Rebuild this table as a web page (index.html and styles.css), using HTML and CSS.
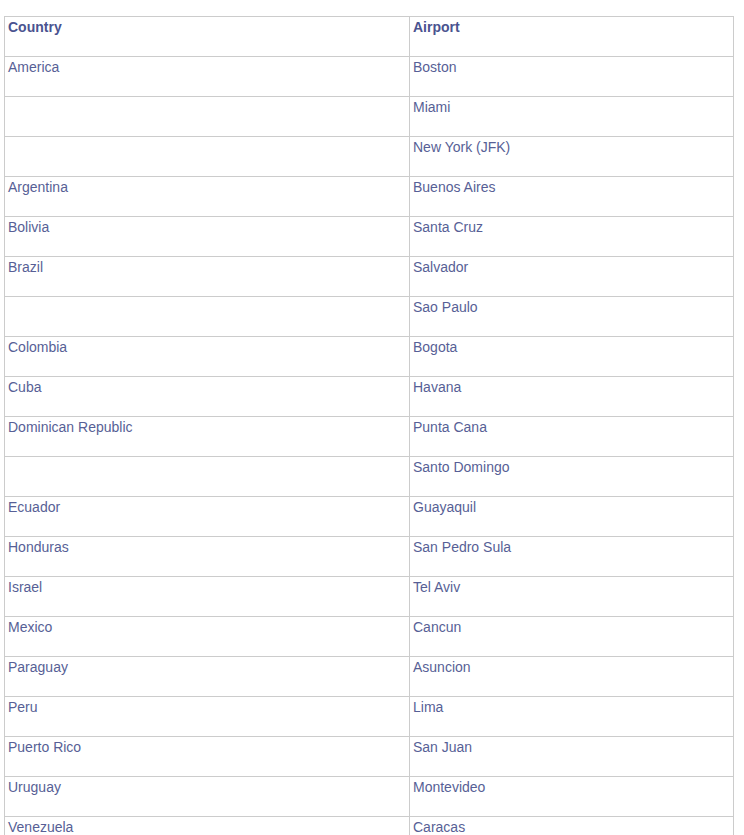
FILE: index.html
```html
<!DOCTYPE html>
<html>
<head>
<meta charset="utf-8">
<link rel="stylesheet" href="styles.css">
</head>
<body>
<table class="airports">
  <colgroup><col class="col-country"><col class="col-airport"></colgroup>
  <thead>
    <tr><th>Country</th><th>Airport</th></tr>
  </thead>
  <tbody>
    <tr><td>America</td><td>Boston</td></tr>
    <tr><td></td><td>Miami</td></tr>
    <tr><td></td><td>New York (JFK)</td></tr>
    <tr><td>Argentina</td><td>Buenos Aires</td></tr>
    <tr><td>Bolivia</td><td>Santa Cruz</td></tr>
    <tr><td>Brazil</td><td>Salvador</td></tr>
    <tr><td></td><td>Sao Paulo</td></tr>
    <tr><td>Colombia</td><td>Bogota</td></tr>
    <tr><td>Cuba</td><td>Havana</td></tr>
    <tr><td>Dominican Republic</td><td>Punta Cana</td></tr>
    <tr><td></td><td>Santo Domingo</td></tr>
    <tr><td>Ecuador</td><td>Guayaquil</td></tr>
    <tr><td>Honduras</td><td>San Pedro Sula</td></tr>
    <tr><td>Israel</td><td>Tel Aviv</td></tr>
    <tr><td>Mexico</td><td>Cancun</td></tr>
    <tr><td>Paraguay</td><td>Asuncion</td></tr>
    <tr><td>Peru</td><td>Lima</td></tr>
    <tr><td>Puerto Rico</td><td>San Juan</td></tr>
    <tr><td>Uruguay</td><td>Montevideo</td></tr>
    <tr><td>Venezuela</td><td>Caracas</td></tr>
  </tbody>
</table>
</body>
</html>
```
FILE: styles.css
```css
html, body {
  margin: 0;
  padding: 0;
  background: #ffffff;
}
body {
  padding: 16px 0 0 4px;
  font-family: "Liberation Sans", Arial, sans-serif;
  font-size: 14px;
  color: #575f96;
}
.airports {
  border-collapse: collapse;
  width: 729px;
  table-layout: fixed;
}
.col-country { width: 405px; }
.col-airport { width: 324px; }
.airports th,
.airports td {
  border: 1px solid #cccccc;
  height: 39px;
  box-sizing: border-box;
  padding: 2px 3px;
  vertical-align: top;
  text-align: left;
  line-height: 17px;
}
.airports tr { height: 40px; }
.airports th {
  font-weight: bold;
  color: #4a5390;
}
```
